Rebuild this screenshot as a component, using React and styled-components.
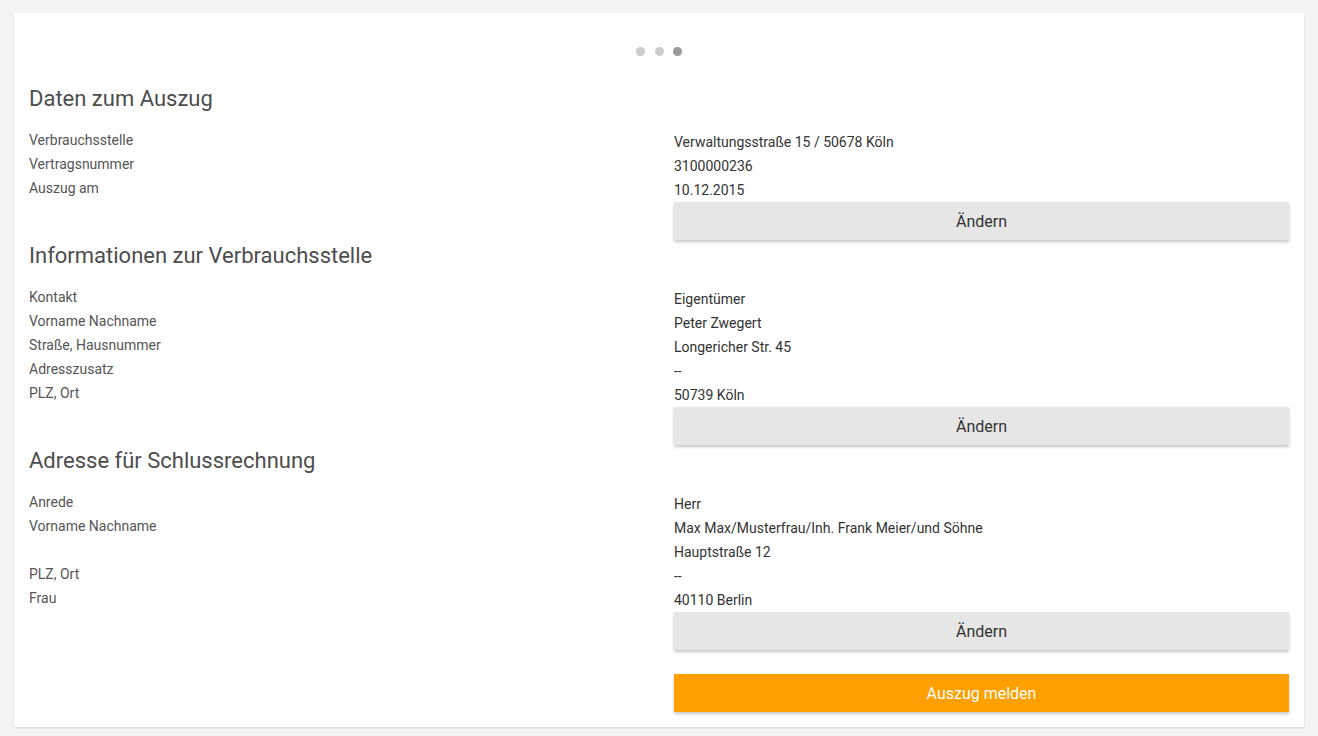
import React from "react";
import styled, { createGlobalStyle } from "styled-components";

const Global = createGlobalStyle`
  html, body { margin: 0; padding: 0; background: #f4f4f4; }
  body { font-family: Roboto, "Noto Sans", Arial, sans-serif; }
  * { box-sizing: border-box; }
`;

const Page = styled.div`
  padding: 13px 14px 9px 14px;
`;

const Card = styled.div`
  background: #fff;
  box-shadow: 0 1px 2px rgba(0, 0, 0, 0.12);
  padding: 0 15px 15px 15px;
`;

const Dots = styled.div`
  display: flex;
  justify-content: center;
  gap: 9.5px;
  height: 71px;
  padding-top: 5px;
  align-items: center;
`;

const Dot = styled.span`
  width: 9px;
  height: 9px;
  border-radius: 50%;
  background: ${(p) => (p.$active ? "#999" : "#ccc")};
`;

const Heading = styled.h2`
  margin: 0;
  font-size: 22px;
  font-weight: 400;
  line-height: 30px;
  color: #4d4d4d;
  padding-bottom: 14px;
`;

const Section = styled.section`
  padding-top: ${(p) => (p.$first ? "0" : "1px")};
`;

const Columns = styled.div`
  display: grid;
  grid-template-columns: 1fr 1fr;
`;

const Labels = styled.div`
  display: flex;
  flex-direction: column;
`;

const Values = styled.div`
  display: flex;
  flex-direction: column;
  padding-left: 15px;
  padding-top: 2px;
`;

const Label = styled.div`
  font-size: 14px;
  line-height: 24px;
  height: 24px;
  color: #555;
`;

const Value = styled.div`
  font-size: 14px;
  line-height: 24px;
  height: 24px;
  color: #333;
`;

const Button = styled.button`
  display: block;
  width: 100%;
  height: 38px;
  border: none;
  border-radius: 0;
  font-family: Roboto, "Noto Sans", Arial, sans-serif;
  font-size: 16px;
  cursor: pointer;
  background: ${(p) => (p.$primary ? "#ffa000" : "#e6e6e6")};
  color: ${(p) => (p.$primary ? "#fff" : "#333")};
  box-shadow: 0 2px 3px rgba(0, 0, 0, 0.22);
  margin-top: ${(p) => (p.$primary ? "24px" : "0")};
`;

const sections = [
  {
    title: "Daten zum Auszug",
    labels: ["Verbrauchsstelle", "Vertragsnummer", "Auszug am"],
    values: ["Verwaltungsstraße 15 / 50678 Köln", "3100000236", "10.12.2015"],
  },
  {
    title: "Informationen zur Verbrauchsstelle",
    labels: ["Kontakt", "Vorname Nachname", "Straße, Hausnummer", "Adresszusatz", "PLZ, Ort"],
    values: ["Eigentümer", "Peter Zwegert", "Longericher Str. 45", "--", "50739 Köln"],
  },
  {
    title: "Adresse für Schlussrechnung",
    labels: ["Anrede", "Vorname Nachname", "", "PLZ, Ort", "Frau"],
    values: ["Herr", "Max Max/Musterfrau/Inh. Frank Meier/und Söhne", "Hauptstraße 12", "--", "40110 Berlin"],
  },
];

export default function App() {
  return (
    <>
      <Global />
      <Page>
        <Card>
          <Dots>
            <Dot />
            <Dot />
            <Dot $active />
          </Dots>
          {sections.map((s, i) => (
            <Section key={s.title} $first={i === 0}>
              <Heading>{s.title}</Heading>
              <Columns>
                <Labels>
                  {s.labels.map((l, j) => (
                    <Label key={j}>{l}</Label>
                  ))}
                </Labels>
                <Values>
                  {s.values.map((v, j) => (
                    <Value key={j}>{v}</Value>
                  ))}
                  <Button>Ändern</Button>
                  {i === sections.length - 1 && <Button $primary>Auszug melden</Button>}
                </Values>
              </Columns>
            </Section>
          ))}
        </Card>
      </Page>
    </>
  );
}
